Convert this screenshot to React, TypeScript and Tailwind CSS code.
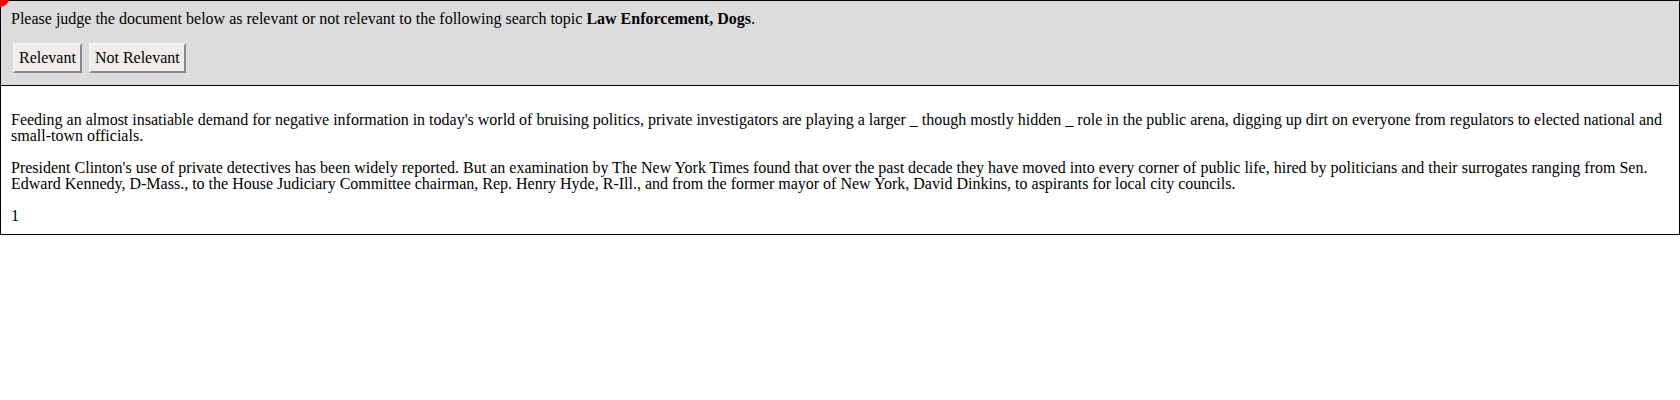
export default function App() {
  return (
    <div className="relative w-[1680px] text-black text-[16px] leading-[16px] font-['Liberation_Serif','Times_New_Roman',serif]">
      {/* red marker */}
      <div className="absolute left-[-9px] top-[-11px] w-[18px] h-[18px] rounded-full bg-[#ff0000]" />

      {/* header */}
      <div className="border border-black bg-[#dcdcdc] px-[10px] pt-[10px] pb-[12px]">
        <p>
          Please judge the document below as relevant or not relevant to the following search topic{' '}
          <b>Law Enforcement, Dogs</b>.
        </p>
        <div className="flex gap-[7px] mt-[16px] ml-[2px]">
          <JudgeButton label="Relevant" />
          <JudgeButton label="Not Relevant" />
        </div>
      </div>

      {/* document */}
      <div className="border border-t-0 border-black px-[10px] pt-[10px] pb-[10px]">
        <p className="mt-[16px]">
          Feeding an almost insatiable demand for negative information in today's world of bruising politics, private investigators are playing a larger _ though mostly hidden _ role in the public arena, digging up dirt on everyone from regulators to elected national and small-town officials.
        </p>
        <p className="mt-[16px]">
          President Clinton's use of private detectives has been widely reported. But an examination by The New York Times found that over the past decade they have moved into every corner of public life, hired by politicians and their surrogates ranging from Sen. Edward Kennedy, D-Mass., to the House Judiciary Committee chairman, Rep. Henry Hyde, R-Ill., and from the former mayor of New York, David Dinkins, to aspirants for local city councils.
        </p>
        <p className="mt-[16px]">1</p>
      </div>
    </div>
  )
}

function JudgeButton({ label }: { label: string }) {
  return (
    <button className="h-[30px] px-[4px] bg-[#f0ede8] border-2 border-t-[#f4f4f4] border-l-[#f4f4f4] border-b-[#8a8a8a] border-r-[#8a8a8a] text-[16px] leading-[16px]">
      {label}
    </button>
  )
}
